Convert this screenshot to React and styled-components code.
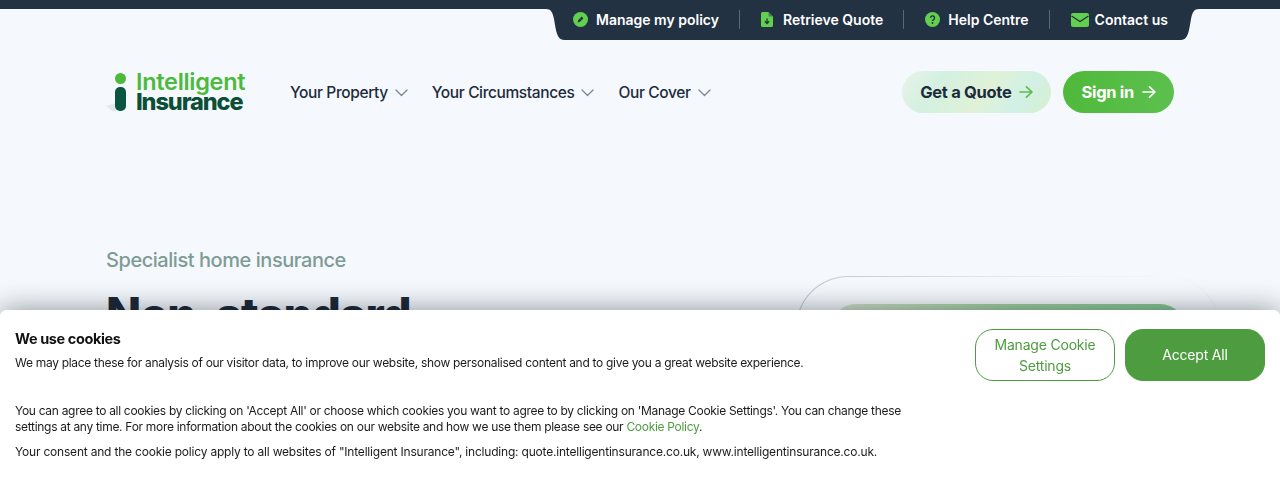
import React from "react";
import styled, { createGlobalStyle } from "styled-components";

const GlobalStyle = createGlobalStyle`
  html, body {
    margin: 0;
    height: 480px;
    overflow: hidden;
    background: #f5f9fd;
    font-family: Inter, "Liberation Sans", sans-serif;
  }
`;

const Page = styled.div`
  height: 480px;
  overflow: hidden;
  border-top: 9px solid #223243;
  box-sizing: border-box;
`;

const TopRow = styled.div`
  display: flex;
  padding-left: 546px;
`;

const Flare = styled.svg`
  display: block;
  flex: none;
  width: 18px;
  height: 31px;
`;

const TopNav = styled.nav`
  display: flex;
  align-items: center;
  width: 617px;
  height: 31px;
  padding: 0 0 10px 9px;
  box-sizing: border-box;
  background: #223243;
`;

const TopLink = styled.a`
  display: flex;
  align-items: center;
  gap: ${(p) => p.$gap || 8}px;
  height: 19px;
  padding-right: 20px;
  margin-right: 21px;
  border-right: 1px solid #5b6875;
  color: #fff;
  font-size: 14px;
  font-weight: 600;
  white-space: nowrap;
  &:last-child {
    border-right: none;
    margin-right: 0;
    padding-right: 0;
  }
`;

const Header = styled.header`
  display: flex;
  align-items: center;
  height: 84px;
  margin-top: 10px;
  padding: 0 106px;
`;

const Logo = styled.div`
  display: flex;
  align-items: center;
  gap: 4px;
  width: 184px;
  flex: none;
`;

const LogoMark = styled.svg`
  display: block;
  flex: none;
  width: 26px;
  height: 40px;
`;

const LogoText = styled.div`
  display: flex;
  flex-direction: column;
  font-size: 23.5px;
  font-weight: 700;
  line-height: 20px;
`;

const LogoLine = styled.span`
  color: ${(p) => (p.$dark ? "#0c4f37" : "#4cba3c")};
  font-weight: ${(p) => (p.$dark ? 800 : 600)};
  letter-spacing: ${(p) => (p.$dark ? "-1.1px" : "-0.3px")};
`;

const MainNav = styled.nav`
  display: flex;
  gap: 24px;
  flex: 1;
`;

const MainLink = styled.a`
  display: flex;
  align-items: center;
  gap: 7px;
  color: #1d2b3c;
  font-size: 15.5px;
  font-weight: 500;
  letter-spacing: -0.38px;
  white-space: nowrap;
`;

const Actions = styled.div`
  display: flex;
  gap: 12px;
`;

const CallToAction = styled.a`
  display: flex;
  align-items: center;
  gap: 8px;
  height: 42px;
  padding: 0 18px 1px;
  box-sizing: border-box;
  border-radius: 21px;
  font-size: 16.5px;
  font-weight: 700;
  letter-spacing: -0.3px;
  color: ${(p) => (p.$solid ? "#fff" : "#1d2b3c")};
  background: ${(p) =>
    p.$solid
      ? "linear-gradient(100deg, #4fb93a, #5dc04f)"
      : "linear-gradient(125deg, #e9f4e9 0%, #d4f0e0 25%, #dff2d8 55%, #d2f0e6 78%, #d6f0cd 100%)"};
`;

const Hero = styled.main`
  display: flex;
  justify-content: space-between;
  padding: 112px 60px 0 106px;
`;

const HeroCopy = styled.div`
  display: flex;
  flex-direction: column;
`;

const Kicker = styled.div`
  color: #7f9b95;
  font-size: 20px;
  font-weight: 500;
  line-height: 28px;
  letter-spacing: -0.45px;
`;

const Title = styled.h1`
  margin: 12px 0 0;
  color: #1a2736;
  font-size: 46px;
  font-weight: 800;
  line-height: 56px;
  letter-spacing: -1.2px;
`;

const HeroCard = styled.div`
  width: 424px;
  height: 300px;
  margin-top: 30px;
  padding: 27px 33px 0;
  box-sizing: border-box;
  border: 1px solid transparent;
  border-radius: 52px;
  background:
    linear-gradient(#f5f9fd, #f5f9fd) padding-box,
    linear-gradient(100deg, #b9c6d4 0%, #e8edf3 50%, #f5f9fd 80%, #e6ebf0 100%) border-box;
`;

const HeroImage = styled.div`
  height: 200px;
  border-radius: 26px;
  background: linear-gradient(90deg, #d2e2ca 0%, #9fd09f 50%, #82c992 100%);
`;

const CookieBanner = styled.aside`
  position: fixed;
  left: 0;
  right: 0;
  bottom: 0;
  height: 170px;
  display: flex;
  justify-content: space-between;
  padding: 19px 15px 0;
  box-sizing: border-box;
  background: #fff;
  border-radius: 6px 6px 0 0;
  box-shadow: 0 0 28px rgba(20, 28, 40, 0.48);
`;

const CookieCopy = styled.div`
  width: 900px;
  color: #1b1b1b;
  font-size: 12px;
  line-height: 16px;
  letter-spacing: -0.3px;
`;

const CookieTitle = styled.h2`
  margin: 0 0 6px;
  color: #111;
  font-size: 14.5px;
  font-weight: 700;
  line-height: 20px;
  letter-spacing: -0.4px;
`;

const CookieText = styled.p`
  margin: 0 0 ${(p) => p.$after || 0}px;
  white-space: nowrap;
  letter-spacing: ${(p) => (p.$loose ? "-0.2px" : "inherit")};
`;

const CookieLink = styled.a`
  color: #4e9c40;
`;

const CookieButtons = styled.div`
  display: flex;
  gap: 10px;
`;

const CookieButton = styled.button`
  width: 140px;
  height: 52px;
  padding: ${(p) => (p.$filled ? "0 14px 2px" : "0 14px")};
  border: 1px solid #4e9c40;
  border-radius: 18px;
  font-family: inherit;
  font-size: 14px;
  line-height: 21px;
  letter-spacing: -0.2px;
  color: ${(p) => (p.$filled ? "#fff" : "#4e9c40")};
  background: ${(p) => (p.$filled ? "#4e9c40" : "#fff")};
`;

const Arrow = ({ color }) => (
  <svg width="14" height="14" viewBox="0 0 14 14" fill="none" stroke={color} strokeWidth="1.6" strokeLinecap="round" strokeLinejoin="round">
    <path d="M1 7h12M7.500 1.800 13 7l-5.500 5.200" />
  </svg>
);

const Chevron = () => (
  <svg width="13" height="13" viewBox="0 0 13 13" fill="none" stroke="#7c8a96" strokeWidth="1.4" strokeLinecap="round" strokeLinejoin="round">
    <path d="M1 4 6.500 9.500 12 4" />
  </svg>
);

const green = "#62cf4f";

const PolicyIcon = () => (
  <svg width="15" height="15" viewBox="0 0 15 15">
    <circle cx="7.5" cy="7.5" r="7.5" fill={green} />
    <path d="m4.6 10.4.7-2.4 3.4-3.4 1.7 1.7L7 9.7z" fill="#223243" />
  </svg>
);

const QuoteIcon = () => (
  <svg width="12" height="15" viewBox="0 0 12 15">
    <path d="M1.5 0H7.5L12 4.5V13.5A1.5 1.5 0 0 1 10.500 15H1.5A1.500 1.500 0 0 1 0 13.500V1.500A1.500 1.500 0 0 1 1.500 0Z" fill={green} />
    <path d="M7.500 0V4.500H12Z" fill="#223243" opacity=".45" />
    <path d="M6 6.500v5M3.800 9.300 6 11.500l2.200-2.200" fill="none" stroke="#223243" strokeWidth="1.3" />
  </svg>
);

const HelpIcon = () => (
  <svg width="15" height="15" viewBox="0 0 15 15">
    <circle cx="7.500" cy="7.500" r="7.500" fill={green} />
    <path d="M5.500 5.800a2 2 0 1 1 3 1.800c-.7.400-1 .8-1 1.500" fill="none" stroke="#223243" strokeWidth="1.400" />
    <circle cx="7.500" cy="11" r=".9" fill="#223243" />
  </svg>
);

const MailIcon = () => (
  <svg width="18" height="14" viewBox="0 0 18 14">
    <rect width="18" height="14" rx="2" fill={green} />
    <path d="M.5 3 9 8.500 17.500 3" fill="none" stroke="#223243" strokeWidth="1.300" />
  </svg>
);

export default function App() {
  return (
    <>
      <GlobalStyle />
      <Page>
        <TopRow>
          <Flare viewBox="0 0 18 31">
            <path d="M0 0C5 0 6.500 3 8 10C10 22 11 31 18 31V0Z" fill="#223243" />
          </Flare>
          <TopNav>
            <TopLink><PolicyIcon />Manage my policy</TopLink>
            <TopLink $gap={10}><QuoteIcon />Retrieve Quote</TopLink>
            <TopLink><HelpIcon />Help Centre</TopLink>
            <TopLink $gap={6}><MailIcon />Contact us</TopLink>
          </TopNav>
          <Flare viewBox="0 0 18 31">
            <path d="M18 0C13 0 11.500 3 10 10C8 22 7 31 0 31V0Z" fill="#223243" />
          </Flare>
        </TopRow>
        <Header>
          <Logo>
            <LogoMark viewBox="0 0 26 40">
              <path d="M0 34 10 31V39.500H7Z" fill="#e3e9ea" />
              <circle cx="14.500" cy="6.500" r="5.500" fill="#4cba3c" />
              <rect x="9" y="15" width="11" height="24" rx="5" fill="#0a5442" />
            </LogoMark>
            <LogoText>
              <LogoLine>Intelligent</LogoLine>
              <LogoLine $dark>Insurance</LogoLine>
            </LogoText>
          </Logo>
          <MainNav>
            <MainLink>Your Property <Chevron /></MainLink>
            <MainLink>Your Circumstances <Chevron /></MainLink>
            <MainLink>Our Cover <Chevron /></MainLink>
          </MainNav>
          <Actions>
            <CallToAction>Get a Quote <Arrow color="#5cb947" /></CallToAction>
            <CallToAction $solid>Sign in <Arrow color="#fff" /></CallToAction>
          </Actions>
        </Header>
        <Hero>
          <HeroCopy>
            <Kicker>Specialist home insurance</Kicker>
            <Title>Non-standard</Title>
          </HeroCopy>
          <HeroCard>
            <HeroImage />
          </HeroCard>
        </Hero>
      </Page>
      <CookieBanner>
        <CookieCopy>
          <CookieTitle>We use cookies</CookieTitle>
          <CookieText $after={32}>We may place these for analysis of our visitor data, to improve our website, show personalised content and to give you a great website experience.</CookieText>
          <CookieText>You can agree to all cookies by clicking on 'Accept All' or choose which cookies you want to agree to by clicking on 'Manage Cookie Settings'. You can change these</CookieText>
          <CookieText $after={9}>settings at any time. For more information about the cookies on our website and how we use them please see our <CookieLink>Cookie Policy</CookieLink>.</CookieText>
          <CookieText $loose>Your consent and the cookie policy apply to all websites of "Intelligent Insurance", including: quote.intelligentinsurance.co.uk, www.intelligentinsurance.co.uk.</CookieText>
        </CookieCopy>
        <CookieButtons>
          <CookieButton>Manage Cookie Settings</CookieButton>
          <CookieButton $filled>Accept All</CookieButton>
        </CookieButtons>
      </CookieBanner>
    </>
  );
}
